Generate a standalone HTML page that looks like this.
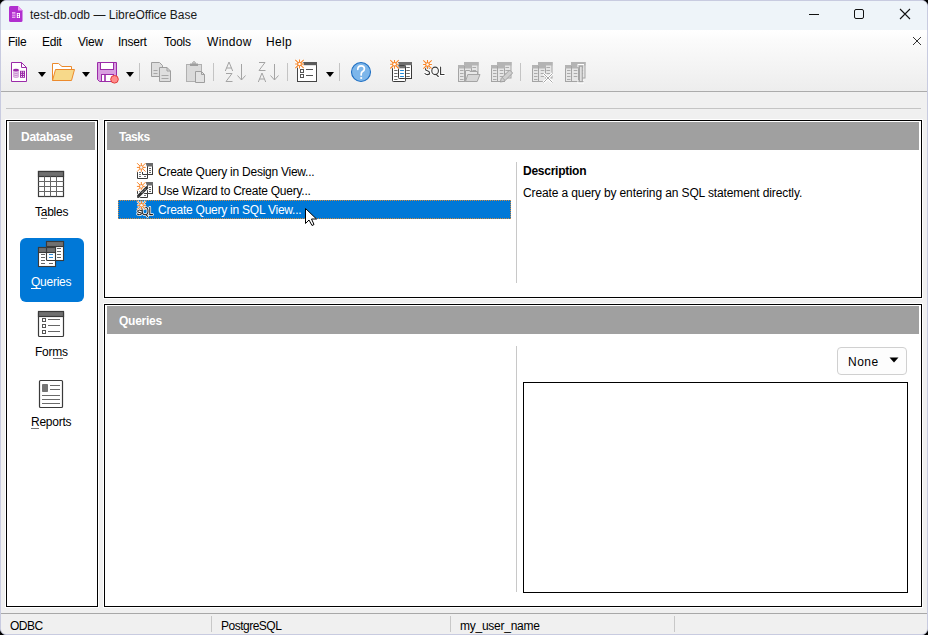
<!DOCTYPE html>
<html><head><meta charset="utf-8">
<style>
*{margin:0;padding:0;box-sizing:border-box}
html,body{width:928px;height:635px;overflow:hidden;background:#000}
body{position:relative;font-family:"Liberation Sans",sans-serif;font-size:12px;letter-spacing:-0.25px;color:#000}
.a{position:absolute}
.t{position:absolute;line-height:14px;white-space:nowrap}
#win{position:absolute;left:0;top:0;width:928px;height:635px;background:#F0F0F0;border:1px solid #C8CBE0;border-radius:6px;overflow:hidden}
#title{position:absolute;left:0;top:0;width:926px;height:29px;background:#EEF4F9}
#mt{position:absolute;left:0;top:29px;width:926px;height:61px;background:linear-gradient(#FFFFFF 0px,#FBFBFB 10px,#EDEDED 61px)}
.sep{position:absolute;width:1px;background:#C8C8C8}
.hdr{position:absolute;background:#A0A0A0}
.panel{position:absolute;background:#fff;border:1px solid #000;box-shadow:0 0 0 1px #fff}
.w{color:#fff}
.b{font-weight:bold}
svg.ov{position:absolute;left:0;top:0}
</style></head><body>
<div id="win">
  <div id="title"></div>
  <div id="mt"></div>
</div>
<!-- title bar -->
<div class="t" style="left:30px;top:8px;font-size:12px;letter-spacing:0;color:#1a1a1a">test-db.odb — LibreOffice Base</div>
<!-- window controls -->
<div class="a" style="left:809px;top:14px;width:10px;height:1px;background:#111"></div>
<div class="a" style="left:854px;top:9px;width:10px;height:10px;border:1px solid #111;border-radius:2px"></div>
<svg class="a" style="left:899px;top:8px" width="12" height="12"><path d="M1 1L11 11M11 1L1 11" stroke="#111" stroke-width="1.1"/></svg>
<!-- menu -->
<div class="t" style="left:8px;top:35px">File</div>
<div class="t" style="left:42px;top:35px">Edit</div>
<div class="t" style="left:78px;top:35px">View</div>
<div class="t" style="left:118px;top:35px">Insert</div>
<div class="t" style="left:164px;top:35px">Tools</div>
<div class="t" style="left:207px;top:35px;letter-spacing:0.35px">Window</div>
<div class="t" style="left:266px;top:35px;letter-spacing:0.3px">Help</div>
<svg class="a" style="left:912px;top:36px" width="10" height="10"><path d="M1 1L9 9M9 1L1 9" stroke="#333" stroke-width="1"/></svg>

<!-- toolbar line -->
<div class="a" style="left:1px;top:91px;width:926px;height:1px;background:#ABABAB"></div>
<div class="a" style="left:6px;top:108px;width:915px;height:1px;background:#C4C4C4"></div>

<!-- Database panel -->
<div class="panel" style="left:6px;top:120px;width:92px;height:487px"></div>
<div class="hdr" style="left:9px;top:122px;width:86px;height:28px"></div>
<div class="t w b" style="left:21px;top:130px">Database</div>

<!-- Queries button -->
<div class="a" style="left:20px;top:238px;width:64px;height:64px;background:#0078D7;border-radius:6px"></div>

<div class="t" style="left:35px;top:205px">Tables</div>
<div class="t w" style="left:31px;top:275px">Queries</div>
<div class="t" style="left:35px;top:345px">Forms</div>
<div class="t" style="left:31px;top:415px">Reports</div>

<div class="a" style="left:41px;top:218px;width:6px;height:1px;background:#777"></div>
<div class="a" style="left:31px;top:288px;width:10px;height:1px;background:#fff"></div>
<div class="a" style="left:53px;top:358px;width:10px;height:1px;background:#777"></div>
<div class="a" style="left:31px;top:428px;width:8px;height:1px;background:#777"></div>
<!-- Tasks panel -->
<div class="panel" style="left:104px;top:120px;width:818px;height:178px"></div>
<div class="hdr" style="left:107px;top:122px;width:812px;height:28px"></div>
<div class="t w b" style="left:119px;top:130px;letter-spacing:-0.5px">Tasks</div>
<div class="a" style="left:118px;top:200px;width:393px;height:19px;background:#0078D7;outline:1px dotted #D08A40;outline-offset:-1px"></div>
<div class="t" style="left:158px;top:165px">Create Query in Design View...</div>
<div class="t" style="left:158px;top:184px">Use Wizard to Create Query...</div>
<div class="t w" style="left:158px;top:203px">Create Query in SQL View...</div>
<div class="a" style="left:516px;top:162px;width:1px;height:121px;background:#C8C8C8"></div>
<div class="t b" style="left:523px;top:164px">Description</div>
<div class="t" style="left:523px;top:186px;letter-spacing:-0.12px">Create a query by entering an SQL statement directly.</div>

<!-- Queries panel -->
<div class="panel" style="left:104px;top:304px;width:818px;height:303px"></div>
<div class="hdr" style="left:107px;top:306px;width:812px;height:28px"></div>
<div class="t w b" style="left:119px;top:314px">Queries</div>
<div class="a" style="left:516px;top:346px;width:1px;height:246px;background:#C8C8C8"></div>
<div class="a" style="left:837px;top:347px;width:70px;height:28px;border:1px solid #D0D0D0;border-radius:4px;background:#FDFDFD"></div>
<div class="t" style="left:848px;top:355px;letter-spacing:0.5px">None</div>
<svg class="a" style="left:889px;top:357px" width="10" height="6"><path d="M0.5 0.5H9.5L5 5.5Z" fill="#000"/></svg>
<div class="a" style="left:523px;top:382px;width:385px;height:211px;border:1px solid #000;background:#fff"></div>

<!-- status bar -->
<div class="a" style="left:1px;top:613px;width:926px;height:1px;background:#A8A8A8"></div>
<div class="t" style="left:10px;top:619px;letter-spacing:-0.5px">ODBC</div>
<div class="sep" style="left:211px;top:616px;height:16px"></div>
<div class="t" style="left:221px;top:619px;letter-spacing:-0.5px">PostgreSQL</div>
<div class="sep" style="left:450px;top:616px;height:16px"></div>
<div class="t" style="left:460px;top:619px">my_user_name</div>
<div class="sep" style="left:674px;top:616px;height:16px"></div>

<!-- ICONS overlay -->
<svg class="ov" width="928" height="635" viewBox="0 0 928 635">
<defs>
  <g id="star">
    <path d="M0 -4.4V4.4M-4.4 0H4.4M-4.2 -4.2L4.2 4.2M4.2 -4.2L-4.2 4.2" stroke="#fff" stroke-width="2.6" opacity="0.85"/>
    <path d="M0 -4.4V4.4M-4.4 0H4.4M-4.2 -4.2L4.2 4.2M4.2 -4.2L-4.2 4.2" stroke="#F7862A" stroke-width="1.1"/>
    <circle r="2.3" fill="#F7862A"/><circle r="1.25" fill="#FFFFFF"/>
  </g>
  <g id="starS">
    <path d="M0 -4.4V4.4M-4.4 0H4.4M-4.2 -4.2L4.2 4.2M4.2 -4.2L-4.2 4.2" stroke="#fff" stroke-width="2.4" opacity="0.8"/>
    <path d="M0 -4.4V4.4M-4.4 0H4.4M-4.2 -4.2L4.2 4.2M4.2 -4.2L-4.2 4.2" stroke="#F7862A" stroke-width="1"/>
    <circle r="2.2" fill="#F7862A"/><circle r="1.3" fill="#F2F8FF"/>
  </g>
</defs>
<!-- title icon -->
<path d="M10.5 6H18L22.5 10.5V20.5Q22.5 22 21 22H10.5Q9 22 9 20.5V7.5Q9 6 10.5 6Z" fill="#B12FCF"/>
<path d="M18 6L22.5 10.5H18Z" fill="#F29CF5"/>
<rect x="12" y="12" width="3.4" height="6" fill="#E9A6F0"/>
<path d="M12 14.2H15.4M12 16.2H15.4" stroke="#B12FCF" stroke-width="0.8"/>
<rect x="16.8" y="13" width="3.2" height="5" fill="#fff"/>
<circle cx="18.4" cy="14.5" r="0.8" fill="#B12FCF"/><circle cx="18.4" cy="16.6" r="0.8" fill="#B12FCF"/>

<!-- toolbar: new -->
<path d="M11.5 62.5H21.5L26.5 67.5V81.5H11.5Z" fill="#fff" stroke="#9B2BA8" stroke-width="1"/>
<path d="M21.5 62.5V67.5H26.5" fill="none" stroke="#9B2BA8"/>
<path d="M13.1 70V76.6Q13.1 77.8 16 77.8Q18.9 77.8 18.9 76.6V70Z" fill="#C47ECC"/>
<ellipse cx="16" cy="70" rx="2.9" ry="1.2" fill="#9B2BA8"/>
<path d="M13.1 71.9Q16 72.9 18.9 71.9M13.1 73.9Q16 74.9 18.9 73.9M13.1 75.9Q16 76.9 18.9 75.9" stroke="#fff" stroke-width="0.7" fill="none"/>
<rect x="20" y="70.8" width="5" height="7" fill="#9B2BA8"/>
<g fill="#fff"><circle cx="21.5" cy="72.1" r="0.55"/><circle cx="23.5" cy="72.1" r="0.55"/><circle cx="21.5" cy="74.3" r="0.55"/><circle cx="23.5" cy="74.3" r="0.55"/><circle cx="21.5" cy="76.5" r="0.55"/><circle cx="23.5" cy="76.5" r="0.55"/></g>
<path d="M38 72H46L42 77Z" fill="#000"/>
<!-- open -->
<path d="M52.5 80.5V63.5H58.5L62 66.5H71.5V69.5" fill="#fff" stroke="#EC8A2C" stroke-width="1"/>
<path d="M55.5 69.5H74.5L71.5 80.5H52.5Z" fill="#F7D98A" stroke="#EC8A2C" stroke-width="1" stroke-linejoin="round"/>
<path d="M82 72H90L86 77Z" fill="#000"/>
<!-- save -->
<path d="M97.5 62.5H116.5V81.5H99.5L97.5 79.5Z" fill="#D99FE0" stroke="#9B2BA8"/>
<rect x="100.5" y="62.5" width="13" height="7" fill="#fff" stroke="#9B2BA8"/>
<rect x="101.5" y="74.5" width="12" height="7" fill="#fff" stroke="#9B2BA8"/>
<path d="M105 75V81.5" stroke="#9B2BA8" stroke-width="1.6"/>
<circle cx="114.5" cy="79.3" r="3.8" fill="#FF8C8C" stroke="#E23A3A" stroke-width="1"/>
<path d="M126 72H134L130 77Z" fill="#000"/>
<rect x="139" y="63" width="1" height="18" fill="#C4C4C4"/>
<!-- copy -->
<path d="M151.5 62.5H159.5L162.5 65.5V76.5H151.5Z" fill="#DEDEDE" stroke="#9E9E9E"/>
<path d="M153.5 70.5H157.5M153.5 73.5H157.5" stroke="#A8A8A8"/>
<path d="M159.5 67.5H167L170.5 71V81.5H159.5Z" fill="#DEDEDE" stroke="#9E9E9E"/>
<path d="M167 67.5V71H170.5" fill="none" stroke="#9E9E9E"/>
<path d="M161.5 75.5H168.5M161.5 78.5H168.5" stroke="#A8A8A8"/>
<!-- paste -->
<rect x="186.5" y="64.5" width="15" height="17" fill="#DADADA" stroke="#B0B0B0"/>
<rect x="190" y="63.5" width="8" height="2.5" fill="#9E9E9E"/>
<circle cx="194" cy="63" r="1.3" fill="none" stroke="#9E9E9E"/>
<path d="M195.5 71.5H201.5L204.5 74.5V82.5H195.5Z" fill="#E2E2E2" stroke="#9E9E9E"/>
<path d="M201.5 71.5V74.5H204.5" fill="none" stroke="#9E9E9E"/>
<rect x="213" y="63" width="1" height="18" fill="#C4C4C4"/>
<!-- sort -->
<g fill="none" stroke="#A4A4A4" stroke-width="1">
<path d="M225.3 71L229 62L232.7 71M226.5 68H231.5"/>
<path d="M226 73.5H232L226 81.5H232.5"/>
<path d="M241.5 64V80M237.5 75.5L241.5 80L245.5 75.5"/>
<path d="M259 62.5H265L259 70.5H265.5"/>
<path d="M258.3 82L262 73L265.7 82M259.5 79H264.5"/>
<path d="M274.5 64V80M270.5 75.5L274.5 80L278.5 75.5"/>
</g>
<rect x="287" y="63" width="1" height="18" fill="#C4C4C4"/>
<!-- form -->
<rect x="297.5" y="62.5" width="19" height="19" fill="#fff" stroke="#444"/>
<rect x="297" y="62" width="20" height="3.2" fill="#5A5A5A"/>
<rect x="300.5" y="69.5" width="3" height="3" fill="none" stroke="#555"/>
<rect x="300.5" y="74.5" width="3" height="3" fill="none" stroke="#555"/>
<path d="M306 69.5H313M306 75.5H313" stroke="#555"/>
<use href="#star" x="299.5" y="64"/>
<path d="M326 72H334L330 77Z" fill="#000"/>
<rect x="339" y="63" width="1" height="18" fill="#C4C4C4"/>
<!-- help -->
<circle cx="361" cy="72" r="9.5" fill="#7DB6EA" stroke="#1F6FC2" stroke-width="1.1"/>
<path d="M357.8 69.3Q357.8 65.8 361.2 65.8Q364.4 65.8 364.4 68.8Q364.4 70.6 362.6 71.6Q361.2 72.4 361.2 74.2V75" fill="none" stroke="#fff" stroke-width="1.7" stroke-linecap="round"/><circle cx="361.2" cy="78" r="1.1" fill="#fff"/>
<!-- query design -->
<rect x="398.5" y="62.5" width="13" height="16" fill="#fff" stroke="#3A3A3A"/>
<rect x="398" y="62" width="14" height="3.2" fill="#6E6E6E"/>
<path d="M406.3 67.5H409.8M406.3 70.5H409.8M406.3 73.5H409.8M406.3 76.5H409.8" stroke="#6A6A6A"/>
<rect x="392.5" y="65.5" width="13" height="16" rx="0.8" fill="#fff" stroke="#3A3A3A"/>
<rect x="398.5" y="65.5" width="7" height="13" rx="0.8" fill="#fff" stroke="#3A3A3A"/>
<rect x="399" y="65.8" width="6.2" height="2.5" fill="#6E6E6E"/>
<path d="M394.2 70.5H397.5M394.2 73.5H397.5M394.2 76.5H397.5M394.2 79.5H397.5" stroke="#6A6A6A"/>
<path d="M400.1 70.5H403.9M400.1 73.5H403.9M400.1 76.5H403.9" stroke="#1E88D8"/>
<use href="#star" x="394.5" y="64.3"/>
<!-- SQL -->
<g fill="none" stroke-linecap="round">
<path d="M429.4 68.1Q428.6 67.1 427.3 67.1Q425.4 67.1 425.4 68.9Q425.4 70.3 427.4 70.8Q429.6 71.4 429.6 72.9Q429.6 74.6 427.4 74.6Q425.9 74.6 425 73.5M431.8 70.85A3.3 3.75 0 1 0 438.4 70.85A3.3 3.75 0 1 0 431.8 70.85M436 74.2L438.3 76.5M440.6 67.1V74.5H444.1" stroke="#fff" stroke-width="2.8"/>
<path d="M429.4 68.1Q428.6 67.1 427.3 67.1Q425.4 67.1 425.4 68.9Q425.4 70.3 427.4 70.8Q429.6 71.4 429.6 72.9Q429.6 74.6 427.4 74.6Q425.9 74.6 425 73.5M431.8 70.85A3.3 3.75 0 1 0 438.4 70.85A3.3 3.75 0 1 0 431.8 70.85M436 74.2L438.3 76.5M440.6 67.1V74.5H444.1" stroke="#383838" stroke-width="1.1"/>
</g>
<use href="#star" x="427.5" y="64.5"/>
<!-- disabled db icons -->
<g id="tb2">
<rect x="464.5" y="62.5" width="13.5" height="15.5" fill="#E6E6E6" stroke="#A4A4A4"/>
<rect x="464" y="62" width="14.5" height="3.5" fill="#B4B4B4"/>
<path d="M472.4 67.5H476.1M472.4 70.5H476.1M472.4 73.5H476.1" stroke="#ABABAB"/>
<rect x="458.5" y="65.5" width="13" height="16" fill="#E6E6E6" stroke="#A4A4A4"/>
<rect x="458" y="65" width="14" height="3.5" fill="#B4B4B4"/>
<path d="M464.5 66V81.5" stroke="#A4A4A4"/>
<path d="M460 70.5H463.5M460 73.5H463.5M460 76.5H463.5M460 79.5H463.5" stroke="#ABABAB"/>
<path d="M466.7 70.5H470.3M466.7 73.5H470.3M466.7 76.5H470.3" stroke="#ABABAB"/>
</g>
<path d="M465.5 81.5V70.5H469L470 71.5H477.5V74.5" fill="#E8E8E8" stroke="#A4A4A4"/>
<path d="M467.8 74.5H480L477.2 81.5H465.5Z" fill="#D6D6D6" stroke="#A4A4A4" stroke-linejoin="round"/>
<use href="#tb2" x="33" y="0"/>
<path d="M500.3 82L501.3 78.3L509.6 70L512.6 73L504.3 81.3Z" fill="#CFCFCF" stroke="#A0A0A0" stroke-linejoin="round"/>
<path d="M502.2 77.6L505 80.4" stroke="#A0A0A0"/>
<rect x="520" y="63" width="1" height="18" fill="#C4C4C4"/>
<use href="#tb2" x="74" y="0"/>
<path d="M543.5 73.5L552.5 82.5M552.5 73.5L543.5 82.5" stroke="#fff" stroke-width="2.5"/>
<path d="M543.5 73.5L552.5 82.5M552.5 73.5L543.5 82.5" stroke="#A8A8A8" stroke-width="1"/>
<use href="#tb2" x="107" y="0"/>
<path d="M577.5 65.5H584M577.5 82H584" stroke="#fff" stroke-width="3"/>
<path d="M578.3 66H583.5M578.3 81.6H583.5M579.6 66V81.6H582.2V66Z" stroke="#A4A4A4" stroke-width="1.3" fill="#F4F4F4"/>
<!-- sidebar: tables -->
<rect x="38.5" y="171.5" width="25" height="25" fill="#fff" stroke="#3A3A3A" stroke-width="1.2"/>
<rect x="38.5" y="171.5" width="25" height="5" fill="#707070" stroke="#3A3A3A" stroke-width="1.2"/>
<path d="M44.5 176.5V196.5M50.5 176.5V196.5M56.5 176.5V196.5M38.5 181.5H63.5M38.5 186.5H63.5M38.5 191.5H63.5" stroke="#666" stroke-width="1"/>
<!-- sidebar: queries -->
<rect x="46.5" y="241.5" width="17" height="19" fill="#fff" stroke="#3A3A3A" stroke-width="1.1"/>
<rect x="46.5" y="241.5" width="17" height="5" fill="#707070" stroke="#3A3A3A" stroke-width="1.1"/>
<path d="M57 248.5H61M57 251.5H61M57 254.5H61M57 257.5H61" stroke="#666"/>
<rect x="38.5" y="247.5" width="17" height="19" fill="#fff" stroke="#3A3A3A" stroke-width="1.1"/>
<rect x="38.5" y="247.5" width="17" height="5" fill="#707070" stroke="#3A3A3A" stroke-width="1.1"/>
<path d="M46.5 247.5V259.5Q46.5 260.5 47.5 260.5H55.5" fill="none" stroke="#3A3A3A" stroke-width="1.1"/>
<path d="M41 254.5H45M41 257.5H45M41 260.5H45M41 263.5H45M49 263.5H53" stroke="#666"/>
<path d="M49 254.5H53M49 257.5H53" stroke="#2A8AD8"/>
<!-- sidebar: forms -->
<rect x="38.5" y="311.5" width="25" height="25" rx="1" fill="#fff" stroke="#3A3A3A" stroke-width="1.2"/>
<rect x="38.5" y="311.5" width="25" height="5" fill="#707070" stroke="#3A3A3A" stroke-width="1.2"/>
<g fill="none" stroke="#555"><rect x="42.5" y="318.5" width="3" height="3"/><rect x="42.5" y="324.5" width="3" height="3"/><rect x="42.5" y="330.5" width="3" height="3"/></g>
<path d="M48 319.5H60M48 325.5H60M48 331.5H60" stroke="#666"/>
<!-- sidebar: reports -->
<rect x="39.5" y="380.5" width="23" height="27" rx="1" fill="#fff" stroke="#3A3A3A" stroke-width="1.2"/>
<rect x="42" y="384" width="6" height="8" rx="0.8" fill="#747474"/>
<path d="M50 385.5H60M50 389.5H60M42 395.5H60M42 399.5H60M42 403.5H60" stroke="#6A6A6A"/>

<!-- task icons -->
<g id="ti1">
<rect x="147.5" y="163.5" width="5" height="11" fill="#fff" stroke="#3A3A3A"/>
<path d="M145.3 163H153V166.5H147Z" fill="#6A6A6A"/>
<path d="M149 168.5H151M149 170.5H151M149 172.5H151" stroke="#666"/>
<path d="M137.5 172V178.5H147.5V174.5" fill="#fff" stroke="#3A3A3A"/>
<path d="M142.5 172V174.5H147.5" fill="none" stroke="#3A3A3A"/>
<path d="M139 172.5H141M139 174.5H141M139 176.5H141M144 176.5H146" stroke="#777"/>
</g>
<use href="#starS" x="141.3" y="167.4"/>
<use href="#ti1" x="0" y="19"/>
<use href="#starS" x="141.3" y="186.4"/>
<path d="M138 196.5L147.5 187" stroke="#fff" stroke-width="4.5"/>
<path d="M138 196.5L147.5 187" stroke="#2E2E2E" stroke-width="3"/>
<path d="M141.5 193L146 188.5" stroke="#fff" stroke-width="0.9" stroke-dasharray="1 1"/>
<!-- SQL task icon -->
<g fill="none" stroke-linecap="round"><path d="M141.2 210.7Q140.5 210 139.4 210Q137.7 210 137.7 211.3Q137.7 212.3 139.5 212.5Q141.4 212.8 141.4 213.6Q141.4 214.7 139.5 214.7Q138.2 214.7 137.5 214M142.2 211A2.9 3.8 0 1 0 148 211A2.9 3.8 0 1 0 142.2 211M145.8 214.3L147.6 216.3M149.8 207.2V214.6H152.6" stroke="#fff" stroke-width="2.6"/><path d="M141.2 210.7Q140.5 210 139.4 210Q137.7 210 137.7 211.3Q137.7 212.3 139.5 212.5Q141.4 212.8 141.4 213.6Q141.4 214.7 139.5 214.7Q138.2 214.7 137.5 214M142.2 211A2.9 3.8 0 1 0 148 211A2.9 3.8 0 1 0 142.2 211M145.8 214.3L147.6 216.3M149.8 207.2V214.6H152.6" stroke="#222" stroke-width="1.1"/></g>
<use href="#starS" x="141.5" y="205.3"/>

<!-- cursor -->
<path d="M305.5 208.5V223.5L309 220L312 225.5L314 224.5L311.5 219H316.5Z" fill="#fff" stroke="#000" stroke-width="1" stroke-linejoin="round"/>
</svg>
</body></html>
